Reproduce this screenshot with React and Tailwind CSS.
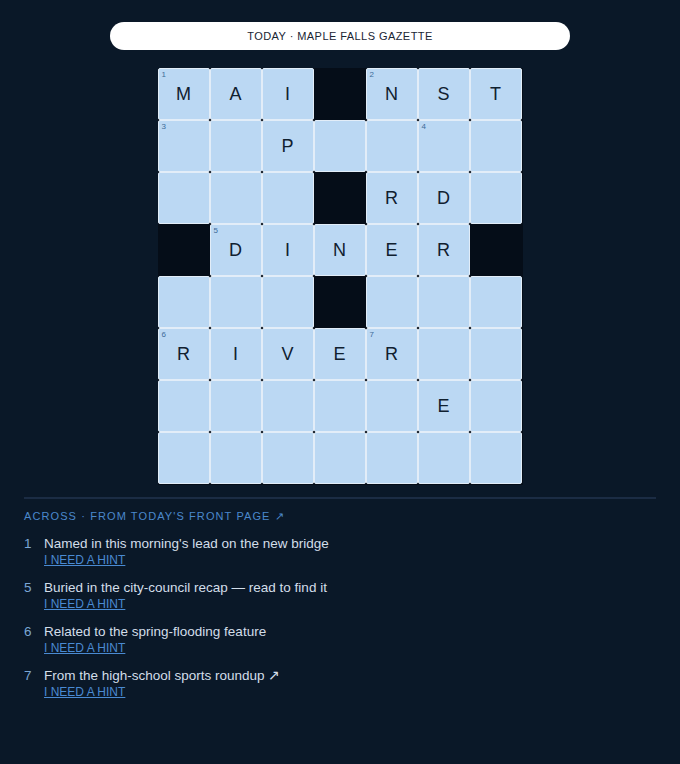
const rows = [
  [["M", 1], ["A"], ["I"], null, ["N", 2], ["S"], ["T"]],
  [["", 3], [""], ["P"], [""], [""], ["", 4], [""]],
  [[""], [""], [""], null, ["R"], ["D"], [""]],
  [null, ["D", 5], ["I"], ["N"], ["E"], ["R"], null],
  [[""], [""], [""], null, [""], [""], [""]],
  [["R", 6], ["I"], ["V"], ["E"], ["R", 7], [""], [""]],
  [[""], [""], [""], [""], [""], ["E"], [""]],
  [[""], [""], [""], [""], [""], [""], [""]],
];

const clues = [
  { n: 1, text: "Named in this morning's lead on the new bridge" },
  { n: 5, text: "Buried in the city-council recap — read to find it" },
  { n: 6, text: "Related to the spring-flooding feature" },
  { n: 7, text: "From the high-school sports roundup ↗" },
];

export default function App() {
  return (
    <div
      className="min-h-screen bg-[#0a1828] text-white px-6 pt-[22px]"
      style={{ fontFamily: '"Liberation Sans", Arial, sans-serif' }}
    >
      <div className="mx-auto w-[460px] h-[28px] rounded-full bg-white flex items-center justify-center text-[11px] tracking-[0.04em] text-[#1a2533]">
        TODAY · MAPLE FALLS GAZETTE
      </div>

      {/* Puzzle grid */}
      <div className="mx-auto mt-[18px] w-[365px] grid grid-cols-[repeat(7,52px)] bg-[#050d18] pr-px pb-px">
        {rows.flat().map((cell, i) =>
          cell ? (
            <div
              key={i}
              className="relative h-[52px] bg-[#bbd8f3] border border-[#e2edf8] rounded-[2px] flex items-center justify-center text-[18px] text-[#10202f]"
            >
              {cell[1] && (
                <span className="absolute left-[3px] top-[2px] text-[8px] leading-none text-[#3d6b98]">
                  {cell[1]}
                </span>
              )}
              {cell[0]}
            </div>
          ) : (
            <div key={i} className="h-[52px]" />
          )
        )}
      </div>

      <div className="mt-[12px] h-[2px] bg-[#1b2c44]" />

      {/* Clues */}
      <div className="mt-[9px] text-[11px] tracking-[0.1em] text-[#4a88cc]">
        ACROSS · FROM TODAY'S FRONT PAGE ↗
      </div>
      <div className="mt-[11px] flex flex-col gap-[12px]">
        {clues.map((c) => (
          <div key={c.n} className="flex">
            <span className="w-[20px] text-[13.5px] leading-[16px] text-[#7aa6d4]">
              {c.n}
            </span>
            <div className="flex flex-col">
              <span className="text-[13.5px] leading-[16px] text-[#d3deea]">
                {c.text}
              </span>
              <a className="text-[12px] leading-[16px] text-[#4a8ad2] underline">
                I NEED A HINT
              </a>
            </div>
          </div>
        ))}
      </div>
    </div>
  );
}
